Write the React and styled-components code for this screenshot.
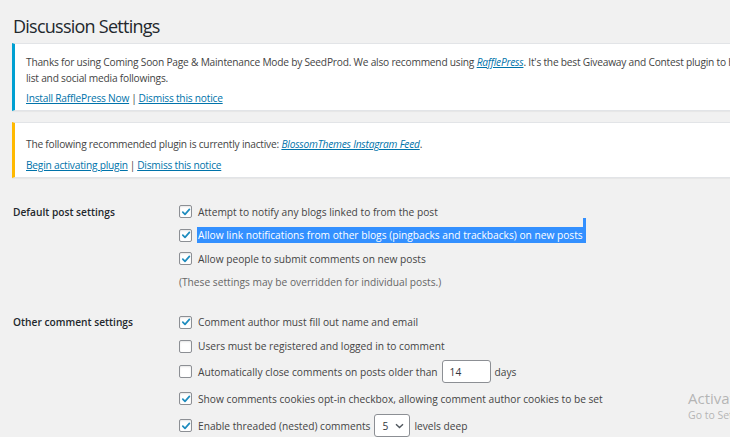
import React from 'react'
import styled, { createGlobalStyle } from 'styled-components'

const GlobalStyle = createGlobalStyle`
  html, body {
    margin: 0;
    padding: 0;
    background: #f1f1f1;
    overflow: hidden;
  }
  body {
    font-family: "Open Sans", "Noto Sans", sans-serif;
    font-size: 10.2px;
    color: #444;
  }
`

const Page = styled.div`
  width: 900px;
  padding: 9px 0 0 12px;
  height: 437px;
  box-sizing: border-box;
`

const Title = styled.h1`
  font-size: 18px;
  font-weight: 400;
  letter-spacing: -0.75px;
  color: #23282d;
  margin: 0 0 0 1px;
  line-height: 34px;
`

const Notice = styled.div`
  background: #fff;
  border: 1px solid #e2e4e7;
  border-left: 3px solid ${(p) => p.$tone};
  box-shadow: 0 1px 1px rgba(0, 0, 0, 0.04);
  padding: ${(p) => p.$top}px 12px 4px 11px;
  margin-top: ${(p) => p.$gap}px;
  letter-spacing: -0.22px;
`

const NoticeText = styled.p`
  margin: 0 0 ${(p) => p.$after || 0}px;
  line-height: 16px;
`

const Link = styled.a`
  color: #0073aa;
  text-decoration: underline;
  font-style: ${(p) => (p.$italic ? 'italic' : 'normal')};
`

const Sep = styled.span`
  margin: 0 2px;
  color: #444;
`

const Section = styled.div`
  display: grid;
  grid-template-columns: 167px 1fr;
  margin-top: ${(p) => p.$gap}px;
`

const Label = styled.div`
  font-weight: 600;
  color: #23282d;
  padding-left: 1px;
  line-height: 24px;
`

const Options = styled.div`
  display: flex;
  flex-direction: column;
`

const Row = styled.div`
  display: flex;
  align-items: center;
  gap: 6px;
  height: ${(p) => p.$h || 23.5}px;
  white-space: nowrap;
`

const Box = styled.span`
  width: 11px;
  height: 11px;
  border: 1px solid #8c8f94;
  border-radius: 2px;
  background: #fff;
  box-shadow: inset 0 1px 2px rgba(0, 0, 0, 0.1);
  display: inline-flex;
  align-items: center;
  justify-content: center;
  flex: none;
`

const Selected = styled.span`
  position: relative;
  background: #3390ff;
  color: #fff;
  padding: 1px 3px 1px 1px;
  margin-left: -1px;
  &::after {
    content: '';
    position: absolute;
    right: 0;
    top: -9px;
    width: 3px;
    height: 10px;
    background: #3390ff;
  }
`

const Hint = styled.div`
  color: #666;
  line-height: 23.5px;
`

const NumberField = styled.span`
  display: inline-flex;
  align-items: center;
  width: 49px;
  height: 23px;
  box-sizing: border-box;
  padding-left: 7px;
  border: 1px solid #8c8f94;
  border-radius: 3px;
  background: #fff;
  color: #32373c;
  margin: 0 -2px;
`

const SelectField = styled.span`
  display: inline-flex;
  align-items: center;
  justify-content: space-between;
  width: 36px;
  height: 23px;
  box-sizing: border-box;
  padding: 0 5px 0 7px;
  border: 1px solid #8c8f94;
  border-radius: 3px;
  background: #fff;
  color: #32373c;
  margin: 0 -2px;
`

const Watermark = styled.div`
  position: absolute;
  left: 688px;
  top: 389px;
  color: rgba(160, 160, 160, 0.75);
  font-family: "Open Sans", sans-serif;
  white-space: nowrap;
`

const WmBig = styled.div`
  font-size: 15px;
  line-height: 18px;
`

const WmSmall = styled.div`
  font-size: 10.5px;
  line-height: 16px;
`

const Check = ({ on }) => (
  <Box>
    {on && (
      <svg width="10" height="10" viewBox="0 0 10 10">
        <path d="M1.8 5.2 L4 7.4 L8.4 2.4" fill="none" stroke="#1e8cbe" strokeWidth="1.7" strokeLinecap="round" strokeLinejoin="round" />
      </svg>
    )}
  </Box>
)

const Chevron = () => (
  <svg width="9" height="6" viewBox="0 0 9 6">
    <path d="M1 1.2 L4.5 4.6 L8 1.2" fill="none" stroke="#50575e" strokeWidth="1.4" />
  </svg>
)

export default function App() {
  return (
    <Page>
      <GlobalStyle />
      <Title>Discussion Settings</Title>

      <Notice $tone="#00a0d2" $top={10} $gap={0}>
        <NoticeText $after={4}>
          Thanks for using Coming Soon Page &amp; Maintenance Mode by SeedProd. We also recommend using{' '}
          <Link $italic>RafflePress</Link>. It's the best Giveaway and Contest plugin to help you grow your email
          <br />
          list and social media followings.
        </NoticeText>
        <NoticeText>
          <Link>Install RafflePress Now</Link>
          <Sep>|</Sep>
          <Link>Dismiss this notice</Link>
        </NoticeText>
      </Notice>

      <Notice $tone="#ffb900" $top={13} $gap={11}>
        <NoticeText $after={5}>
          The following recommended plugin is currently inactive: <Link $italic>BlossomThemes Instagram Feed</Link>.
        </NoticeText>
        <NoticeText>
          <Link>Begin activating plugin</Link>
          <Sep>|</Sep>
          <Link>Dismiss this notice</Link>
        </NoticeText>
      </Notice>

      <Section $gap={22}>
        <Label>Default post settings</Label>
        <Options>
          <Row><Check on />Attempt to notify any blogs linked to from the post</Row>
          <Row><Check on /><Selected>Allow link notifications from other blogs (pingbacks and trackbacks) on new posts</Selected></Row>
          <Row><Check on />Allow people to submit comments on new posts</Row>
          <Hint>(These settings may be overridden for individual posts.)</Hint>
        </Options>
      </Section>

      <Section $gap={16}>
        <Label>Other comment settings</Label>
        <Options>
          <Row $h={24}><Check on />Comment author must fill out name and email</Row>
          <Row $h={24}><Check />Users must be registered and logged in to comment</Row>
          <Row $h={27}><Check />Automatically close comments on posts older than <NumberField>14</NumberField> days</Row>
          <Row $h={27}><Check on />Show comments cookies opt-in checkbox, allowing comment author cookies to be set</Row>
          <Row $h={27}><Check on />Enable threaded (nested) comments <SelectField>5 <Chevron /></SelectField> levels deep</Row>
        </Options>
      </Section>

      <Watermark>
        <WmBig>Activate Windows</WmBig>
        <WmSmall>Go to Settings to activate Windows.</WmSmall>
      </Watermark>
    </Page>
  )
}
